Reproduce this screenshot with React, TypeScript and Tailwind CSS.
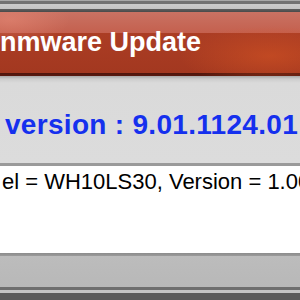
export default function App() {
  return (
    <div className="flex h-[300px] w-[300px] flex-col overflow-hidden bg-white">
      {/* window chrome top */}
      <div className="h-[12px] shrink-0 bg-[linear-gradient(to_bottom,#a8a8a8_0px,#a8a8a8_1px,#727272_1px,#727272_4px,#cbcbcb_4px,#c4c4c4_9px,#5e5e5e_9px,#4a4a4a_12px)]" />

      {/* red banner */}
      <div className="h-[64px] shrink-0 overflow-hidden bg-[radial-gradient(ellipse_90px_30px_at_270px_44px,rgba(215,85,35,0.55),transparent),radial-gradient(ellipse_60px_25px_at_10px_8px,rgba(235,140,120,0.5),transparent),linear-gradient(to_bottom,#c97263_0px,#c4604e_21px,#ab3d24_21px,#a33820_61px,#4e150c_61px,#5a1a10_64px)] pt-[17px]">
        <span className="block whitespace-pre font-['Liberation_Sans',Arial,sans-serif] text-[27px] leading-none font-bold text-white">
          nmware Update
        </span>
      </div>

      {/* version panel */}
      <div className="h-[90px] shrink-0 border-b-[3px] border-[#9a9a9a] bg-[linear-gradient(to_bottom,#a9a9a9_0px,#cdcdcd_3px,#dadada_7px,#dcdcdc_100%)] pt-[35px] pl-[5px]">
        <span className="block whitespace-pre font-['Liberation_Sans',Arial,sans-serif] text-[28px] leading-none font-bold tracking-[0.3px] text-[#1530ee]">
          version : 9.01.1124.01
        </span>
      </div>

      {/* log box */}
      <div className="h-[87px] shrink-0 bg-white pt-[5px] pl-[2px]">
        <span className="block whitespace-pre font-['Liberation_Sans',Arial,sans-serif] text-[22px] leading-none text-black">
          el = WH10LS30, Version = 1.00
        </span>
      </div>

      {/* bottom chrome */}
      <div className="h-[47px] shrink-0 bg-[linear-gradient(to_bottom,#8c8c8c_0px,#9a9a9a_3px,#bcbcbc_3px,#b8b8b8_34px,#6e6e6e_34px,#6e6e6e_37px,#c4c4c4_37px,#c4c4c4_40px,#5a5a5a_40px,#5a5a5a_47px)]" />
    </div>
  );
}
